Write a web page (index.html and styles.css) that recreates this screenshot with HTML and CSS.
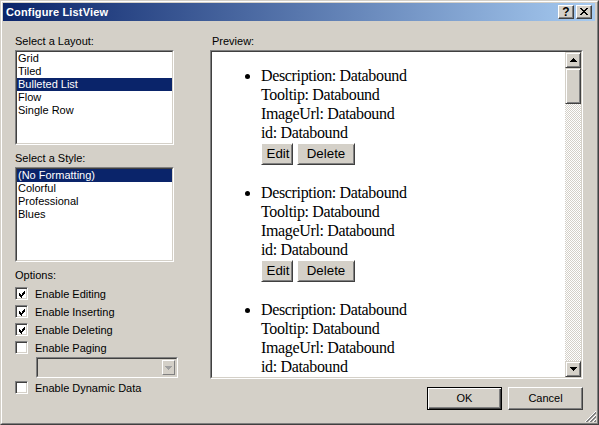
FILE: index.html
```html
<!DOCTYPE html>
<html>
<head>
<meta charset="utf-8">
<title>Configure ListView</title>
<link rel="stylesheet" href="styles.css">
</head>
<body>
<div class="window">
  <div class="frame">
    <div class="titlebar">
      <span class="title">Configure ListView</span>
      <span class="tbtn help">?</span>
      <span class="tbtn close">
        <svg width="8" height="7" viewBox="0 0 8 7" shape-rendering="crispEdges">
          <rect x="0" y="0" width="2" height="1" fill="#000"/>
          <rect x="6" y="0" width="2" height="1" fill="#000"/>
          <rect x="1" y="1" width="2" height="1" fill="#000"/>
          <rect x="5" y="1" width="2" height="1" fill="#000"/>
          <rect x="2" y="2" width="4" height="1" fill="#000"/>
          <rect x="3" y="3" width="2" height="1" fill="#000"/>
          <rect x="2" y="4" width="4" height="1" fill="#000"/>
          <rect x="1" y="5" width="2" height="1" fill="#000"/>
          <rect x="5" y="5" width="2" height="1" fill="#000"/>
          <rect x="0" y="6" width="2" height="1" fill="#000"/>
          <rect x="6" y="6" width="2" height="1" fill="#000"/>
        </svg>
      </span>
    </div>
    <div class="body">
      <div class="left">
        <div class="label">Select a Layout:</div>
        <div class="sunken listbox">
          <div class="sunken-inner list">
            <div class="item">Grid</div>
            <div class="item">Tiled</div>
            <div class="item selected">Bulleted List</div>
            <div class="item">Flow</div>
            <div class="item">Single Row</div>
          </div>
        </div>
        <div class="label gap-top">Select a Style:</div>
        <div class="sunken listbox">
          <div class="sunken-inner list">
            <div class="item selected">(No Formatting)</div>
            <div class="item">Colorful</div>
            <div class="item">Professional</div>
            <div class="item">Blues</div>
          </div>
        </div>
        <div class="label gap-top">Options:</div>
        <div class="options">
          <div class="check-row">
            <span class="checkbox"><svg width="9" height="9" viewBox="0 0 9 9" shape-rendering="crispEdges" fill="#000"><rect x="1" y="3" width="1" height="3"/><rect x="2" y="4" width="1" height="3"/><rect x="3" y="5" width="1" height="3"/><rect x="4" y="4" width="1" height="3"/><rect x="5" y="3" width="1" height="3"/><rect x="6" y="2" width="1" height="3"/><rect x="7" y="1" width="1" height="3"/></svg></span>
            <span>Enable Editing</span>
          </div>
          <div class="check-row">
            <span class="checkbox"><svg width="9" height="9" viewBox="0 0 9 9" shape-rendering="crispEdges" fill="#000"><rect x="1" y="3" width="1" height="3"/><rect x="2" y="4" width="1" height="3"/><rect x="3" y="5" width="1" height="3"/><rect x="4" y="4" width="1" height="3"/><rect x="5" y="3" width="1" height="3"/><rect x="6" y="2" width="1" height="3"/><rect x="7" y="1" width="1" height="3"/></svg></span>
            <span>Enable Inserting</span>
          </div>
          <div class="check-row">
            <span class="checkbox"><svg width="9" height="9" viewBox="0 0 9 9" shape-rendering="crispEdges" fill="#000"><rect x="1" y="3" width="1" height="3"/><rect x="2" y="4" width="1" height="3"/><rect x="3" y="5" width="1" height="3"/><rect x="4" y="4" width="1" height="3"/><rect x="5" y="3" width="1" height="3"/><rect x="6" y="2" width="1" height="3"/><rect x="7" y="1" width="1" height="3"/></svg></span>
            <span>Enable Deleting</span>
          </div>
          <div class="check-row">
            <span class="checkbox"></span>
            <span>Enable Paging</span>
          </div>
          <div class="sunken combo">
            <div class="sunken-inner combo-inner">
              <span class="combo-btn">
                <svg width="7" height="4" viewBox="0 0 7 4" shape-rendering="crispEdges" fill="#a0a0a0"><rect x="0" y="0" width="7" height="1"/><rect x="1" y="1" width="5" height="1"/><rect x="2" y="2" width="3" height="1"/><rect x="3" y="3" width="1" height="1"/></svg>
              </span>
            </div>
          </div>
          <div class="check-row dyn">
            <span class="checkbox"></span>
            <span>Enable Dynamic Data</span>
          </div>
        </div>
      </div>
      <div class="right">
        <div class="label preview-label">Preview:</div>
        <div class="sunken preview">
          <div class="sunken-inner preview-inner">
            <div class="preview-content">
              <ul class="items">
                <li>
                  <div>Description: Databound</div>
                  <div>Tooltip: Databound</div>
                  <div>ImageUrl: Databound</div>
                  <div>id: Databound</div>
                  <div class="item-btns"><span class="pbtn edit">Edit</span><span class="pbtn del">Delete</span></div>
                </li>
                <li>
                  <div>Description: Databound</div>
                  <div>Tooltip: Databound</div>
                  <div>ImageUrl: Databound</div>
                  <div>id: Databound</div>
                  <div class="item-btns"><span class="pbtn edit">Edit</span><span class="pbtn del">Delete</span></div>
                </li>
                <li>
                  <div>Description: Databound</div>
                  <div>Tooltip: Databound</div>
                  <div>ImageUrl: Databound</div>
                  <div>id: Databound</div>
                </li>
              </ul>
            </div>
            <div class="scrollbar">
              <span class="sbtn">
                <svg width="7" height="4" viewBox="0 0 7 4" shape-rendering="crispEdges" fill="#000"><rect x="3" y="0" width="1" height="1"/><rect x="2" y="1" width="3" height="1"/><rect x="1" y="2" width="5" height="1"/><rect x="0" y="3" width="7" height="1"/></svg>
              </span>
              <span class="thumb"></span>
              <span class="track"></span>
              <span class="sbtn">
                <svg width="7" height="4" viewBox="0 0 7 4" shape-rendering="crispEdges" fill="#000"><rect x="0" y="0" width="7" height="1"/><rect x="1" y="1" width="5" height="1"/><rect x="2" y="2" width="3" height="1"/><rect x="3" y="3" width="1" height="1"/></svg>
              </span>
            </div>
          </div>
        </div>
        <div class="footer">
          <span class="btn default">OK</span>
          <span class="btn">Cancel</span>
        </div>
      </div>
      <div class="grip">
        <svg width="12" height="12" viewBox="0 0 12 12" shape-rendering="crispEdges">
          <path d="M1 12 L12 1" stroke="#fff"/>
          <path d="M2 12 L12 2" stroke="#808080"/>
          <path d="M3 12 L12 3" stroke="#808080"/>
          <path d="M5 12 L12 5" stroke="#fff"/>
          <path d="M6 12 L12 6" stroke="#808080"/>
          <path d="M7 12 L12 7" stroke="#808080"/>
          <path d="M9 12 L12 9" stroke="#fff"/>
          <path d="M10 12 L12 10" stroke="#808080"/>
          <path d="M11 12 L12 11" stroke="#808080"/>
        </svg>
      </div>
    </div>
  </div>
</div>
</body>
</html>
```
FILE: styles.css
```css
* { box-sizing: border-box; }

body {
  margin: 0;
  background: #d4d0c8;
  font-family: "Liberation Sans", Arial, sans-serif;
  font-size: 11px;
  color: #000;
}

.window {
  width: 599px;
  height: 425px;
  border: 1px solid;
  border-color: #d4d0c8 #404040 #404040 #d4d0c8;
}

.frame {
  height: 100%;
  border: 1px solid;
  border-color: #fff #808080 #808080 #fff;
  padding: 1px;
  display: flex;
  flex-direction: column;
}

.titlebar {
  height: 18px;
  flex: none;
  background: linear-gradient(to right, #0a246a, #a6caf0);
  display: flex;
  align-items: center;
  padding: 0 3px 0 3px;
  margin-right: 1px;
  gap: 2px;
}

.title {
  flex: 1;
  color: #fff;
  font-weight: bold;
  font-size: 11px;
  letter-spacing: 0.15px;
}

.tbtn {
  width: 16px;
  height: 14px;
  background: #d4d0c8;
  border: 1px solid;
  border-color: #fff #404040 #404040 #fff;
  box-shadow: inset -1px -1px #808080;
  display: flex;
  align-items: center;
  justify-content: center;
}

.help {
  font-weight: bold;
  font-size: 12px;
  line-height: 12px;
  padding-bottom: 1px;
}

.close svg { margin-top: -1px; }

.body {
  flex: 1;
  display: flex;
  padding: 14px 0 0 12px;
}

.left {
  width: 163px;
  display: flex;
  flex-direction: column;
}

.label {
  height: 13px;
  line-height: 13px;
  margin-bottom: 2px;
  white-space: nowrap;
}

.gap-top { margin-top: 7px; }

.sunken {
  border: 1px solid;
  border-color: #808080 #fff #fff #808080;
}

.sunken-inner {
  height: 100%;
  border: 1px solid;
  border-color: #404040 #d4d0c8 #d4d0c8 #404040;
}

.listbox {
  width: 159px;
  height: 95px;
}

.list {
  background: #fff;
}

.item {
  height: 13px;
  line-height: 13px;
  padding-left: 1px;
  white-space: nowrap;
}

.item.selected {
  background: #0a246a;
  color: #fff;
}

.options {
  margin-top: 3px;
  display: flex;
  flex-direction: column;
}

.check-row {
  height: 13px;
  display: flex;
  align-items: center;
  margin-bottom: 5px;
  white-space: nowrap;
}

.checkbox {
  width: 13px;
  height: 13px;
  flex: none;
  margin-right: 7px;
  background: #fff;
  border: 1px solid;
  border-color: #808080 #fff #fff #808080;
  box-shadow: inset 1px 1px #404040, inset -1px -1px #d4d0c8;
  padding: 1px;
  display: flex;
}

.checkbox svg { display: block; margin: 1px 0 0 1px; }

.combo {
  width: 142px;
  height: 21px;
  margin: -2px 0 0 21px;
}

.combo-inner {
  background: #d4d0c8;
  display: flex;
  justify-content: flex-end;
  align-items: center;
  padding-right: 1px;
}

.combo-btn {
  width: 13px;
  height: 15px;
  border: 1px solid;
  border-color: #fff #808080 #808080 #fff;
  display: flex;
  align-items: center;
  justify-content: center;
}

.dyn { margin-top: 3px; }

.right {
  width: 373px;
  margin-left: 32px;
  display: flex;
  flex-direction: column;
}

.preview-label { padding-left: 2px; }

.preview {
  height: 329px;
}

.preview-inner {
  display: flex;
  background: #fff;
}

.preview-content {
  flex: 1;
  overflow: hidden;
}

.items {
  margin: 0;
  padding: 14px 0 0 49px;
  list-style: disc;
  font-family: "Liberation Serif", "Times New Roman", serif;
  font-size: 16px;
  line-height: 19px;
  letter-spacing: -0.35px;
}

.items li {
  margin-bottom: 17.7px;
  white-space: nowrap;
}

.item-btns {
  display: flex;
  gap: 4px;
  margin-top: 1.3px;
  letter-spacing: 0;
}

.pbtn {
  height: 22px;
  font-family: "Liberation Sans", Arial, sans-serif;
  font-size: 13.33px;
  line-height: 20px;
  text-align: center;
  background: #d4d0c8;
  border: 1px solid;
  border-color: #fff #404040 #404040 #fff;
  box-shadow: inset 1px 1px #d4d0c8, inset -1px -1px #808080;
}

.pbtn.edit { width: 32px; padding-left: 2px; }
.pbtn.del { width: 58px; }

.scrollbar {
  width: 16px;
  flex: none;
  display: flex;
  flex-direction: column;
}

.sbtn, .thumb {
  width: 16px;
  height: 16px;
  flex: none;
  background: #d4d0c8;
  border: 1px solid;
  border-color: #d4d0c8 #404040 #404040 #d4d0c8;
  box-shadow: inset 1px 1px #fff, inset -1px -1px #808080;
  display: flex;
  align-items: center;
  justify-content: center;
}

.thumb { height: 36px; }

.track {
  flex: 1;
  background: repeating-conic-gradient(#d4d0c8 0 25%, #fff 0 50%) 0 0 / 2px 2px;
}

.footer {
  margin-top: 8px;
  display: flex;
  justify-content: flex-end;
  gap: 6px;
}

.btn {
  width: 75px;
  height: 23px;
  line-height: 21px;
  text-align: center;
  background: #d4d0c8;
  border: 1px solid;
  border-color: #fff #404040 #404040 #fff;
  box-shadow: inset -1px -1px #808080;
}

.btn.default {
  border-color: #000;
  box-shadow: inset 1px 1px #fff, inset -1px -1px #404040, inset -2px -2px #808080;
}

.grip {
  width: 12px;
  height: 12px;
  margin-left: 1px;
  align-self: flex-end;
}

.grip svg { display: block; }
```
